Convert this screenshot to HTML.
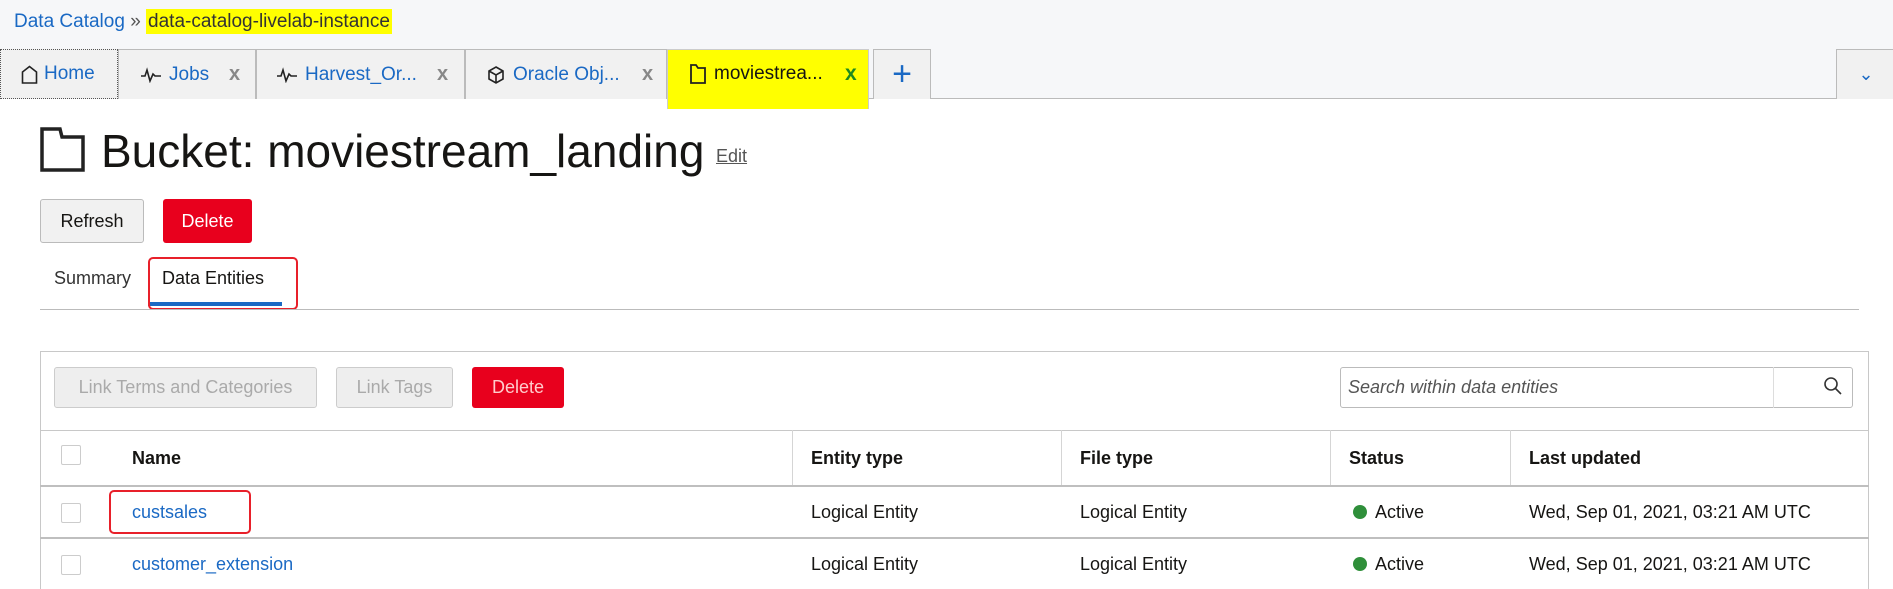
<!DOCTYPE html>
<html style="overflow:hidden;height:589px"><head><meta charset="utf-8"><style>
*{box-sizing:border-box;margin:0;padding:0}
body{width:1893px;height:589px;overflow:hidden;background:#fff;font-family:"Liberation Sans",Arial,sans-serif;color:#161513;position:relative}
.a{position:absolute}
.top{left:0;top:0;width:1893px;height:99px;background:#f6f7f9}
.tab{position:absolute;top:49px;height:50px;background:#f1f1f1;border:1px solid #bbb;border-bottom:none;font-size:19px;color:#1a69c4;display:flex;align-items:center}
.x{position:absolute;font-size:20px;color:#888;font-weight:bold}
.btn{position:absolute;border-radius:3px;font-size:18px;display:flex;align-items:center;justify-content:center}
.hd{font-weight:bold;font-size:18px;top:448px}
.cell{font-size:18px}
.vl{position:absolute;top:430px;width:1px;height:56px;background:#d5d5d5}
.cb{position:absolute;left:61px;width:20px;height:20px;border:1px solid #ccc;border-radius:2px;background:#fff}
.dot{display:inline-block;width:14px;height:14px;border-radius:50%;background:#2f8f3a;margin-right:8px;vertical-align:-1px}
</style></head><body>
<div class="a top"></div>
<div class="a" style="left:14px;top:11px;font-size:19px;color:#1a69c4">Data Catalog <span style="color:#555">»</span> <span style="background:#ffff00;color:#333;padding:2px 2px">data-catalog-livelab-instance</span></div>
<div class="a" style="left:0;top:98px;width:1893px;height:1px;background:#bbb"></div>
<div class="tab" style="left:0;width:118px;border:1px dotted #555;padding-left:20px"><svg width="17" height="19" viewBox="0 0 17 19" style="margin-right:6px"><path d="M1.5 18V7L8.5 1.5 15.5 7V18Z" fill="none" stroke="#222" stroke-width="1.6"/></svg>Home</div>
<div class="tab" style="left:118px;width:138px;padding-left:22px"><svg width="20" height="16" viewBox="0 0 20 16" style="margin-right:8px"><path d="M0 9H4L6 3 9 14 12 7 14 9H20" fill="none" stroke="#222" stroke-width="1.6"/></svg>Jobs<span class="x" style="left:110px">x</span></div>
<div class="tab" style="left:256px;width:209px;padding-left:20px"><svg width="20" height="16" viewBox="0 0 20 16" style="margin-right:8px"><path d="M0 9H4L6 3 9 14 12 7 14 9H20" fill="none" stroke="#222" stroke-width="1.6"/></svg>Harvest_Or...<span class="x" style="left:180px">x</span></div>
<div class="tab" style="left:465px;width:202px;padding-left:22px"><svg width="16" height="18" viewBox="0 0 16 18" style="margin-right:9px"><path d="M8 1L15 5V13L8 17 1 13V5ZM1 5L8 9 15 5M8 9V17" fill="none" stroke="#222" stroke-width="1.6"/></svg>Oracle Obj...<span class="x" style="left:176px">x</span></div>
<div class="a" style="left:667px;top:49px;width:202px;height:60px;background:#ffff00;border:1px solid #ccc;border-bottom:none"></div>
<div class="a" style="left:690px;top:63px;display:flex;align-items:center;font-size:19px;color:#161513"><svg width="16" height="20" viewBox="0 0 16 20" style="margin-right:8px"><path d="M1 19V1H6L8 4H15V19Z" fill="none" stroke="#222" stroke-width="1.8"/></svg>moviestrea...</div>
<div class="a" style="left:845px;top:62px;font-size:21px;font-weight:bold;color:#1f8a1f">x</div>
<div class="tab" style="left:873px;width:58px;justify-content:center;font-size:34px;color:#1a69c4;font-weight:300">+</div>
<div class="tab" style="left:1836px;width:60px;justify-content:center;font-size:18px;color:#1a69c4">&#8964;</div>
<svg class="a" style="left:40px;top:127px" width="45" height="45" viewBox="0 0 45 45"><path d="M2 43V2H20L22 10H43V43Z" fill="none" stroke="#222" stroke-width="3.5"/></svg>
<div class="a" style="left:101px;top:124px;font-size:46px;color:#161513">Bucket: moviestream_landing</div>
<div class="a" style="left:716px;top:146px;font-size:18px;color:#555;text-decoration:underline">Edit</div>
<div class="btn" style="left:40px;top:199px;width:104px;height:44px;background:#f1f1f1;border:1px solid #bbb;color:#161513">Refresh</div>
<div class="btn" style="left:163px;top:199px;width:89px;height:44px;background:#e8001d;color:#fff">Delete</div>
<div class="a" style="left:54px;top:268px;font-size:18px;color:#333">Summary</div>
<div class="a" style="left:162px;top:268px;font-size:18px;color:#161513">Data Entities</div>
<div class="a" style="left:148px;top:302px;width:134px;height:4px;background:#1a69c4"></div>
<div class="a" style="left:148px;top:257px;width:150px;height:53px;border:2px solid #e8202a;border-radius:5px"></div>
<div class="a" style="left:40px;top:309px;width:1819px;height:1px;background:#bbb"></div>
<div class="a" style="left:40px;top:351px;width:1829px;height:245px;border:1px solid #c8c8c8"></div>
<div class="btn" style="left:54px;top:367px;width:263px;height:41px;background:#eee;border:1px solid #ccc;color:#aaa">Link Terms and Categories</div>
<div class="btn" style="left:336px;top:367px;width:117px;height:41px;background:#eee;border:1px solid #ccc;color:#aaa">Link Tags</div>
<div class="btn" style="left:472px;top:367px;width:92px;height:41px;background:#e8001d;color:#fcc">Delete</div>
<div class="a" style="left:1340px;top:367px;width:513px;height:41px;border:1px solid #bbb;border-radius:3px"></div>
<div class="a" style="left:1773px;top:367px;width:1px;height:41px;background:#ddd"></div>
<div class="a" style="left:1348px;top:377px;font-size:18px;font-style:italic;color:#555">Search within data entities</div>
<svg class="a" style="left:1823px;top:376px" width="20" height="20" viewBox="0 0 20 20"><circle cx="8" cy="8" r="6" fill="none" stroke="#333" stroke-width="1.6"/><path d="M12.5 12.5L18 18" stroke="#333" stroke-width="1.6"/></svg>
<div class="a" style="left:40px;top:430px;width:1829px;height:1px;background:#c8c8c8"></div>
<div class="vl" style="left:792px"></div><div class="vl" style="left:1061px"></div><div class="vl" style="left:1330px"></div><div class="vl" style="left:1510px"></div>
<div class="cb" style="top:445px"></div>
<div class="a hd" style="left:132px">Name</div>
<div class="a hd" style="left:811px">Entity type</div>
<div class="a hd" style="left:1080px">File type</div>
<div class="a hd" style="left:1349px">Status</div>
<div class="a hd" style="left:1529px">Last updated</div>
<div class="a" style="left:40px;top:485px;width:1829px;height:2px;background:#bfbfbf"></div>
<div class="cb" style="top:503px"></div>
<div class="a cell" style="left:132px;top:502px;color:#1a69c4">custsales</div>
<div class="a" style="left:109px;top:490px;width:142px;height:44px;border:2px solid #e8202a;border-radius:5px"></div>
<div class="a cell" style="left:811px;top:502px">Logical Entity</div>
<div class="a cell" style="left:1080px;top:502px">Logical Entity</div>
<div class="a cell" style="left:1353px;top:502px"><span class="dot"></span>Active</div>
<div class="a cell" style="left:1529px;top:502px">Wed, Sep 01, 2021, 03:21 AM UTC</div>
<div class="a" style="left:40px;top:537px;width:1829px;height:2px;background:#bfbfbf"></div>
<div class="cb" style="top:555px"></div>
<div class="a cell" style="left:132px;top:554px;color:#1a69c4">customer_extension</div>
<div class="a cell" style="left:811px;top:554px">Logical Entity</div>
<div class="a cell" style="left:1080px;top:554px">Logical Entity</div>
<div class="a cell" style="left:1353px;top:554px"><span class="dot"></span>Active</div>
<div class="a cell" style="left:1529px;top:554px">Wed, Sep 01, 2021, 03:21 AM UTC</div>
</body></html>
